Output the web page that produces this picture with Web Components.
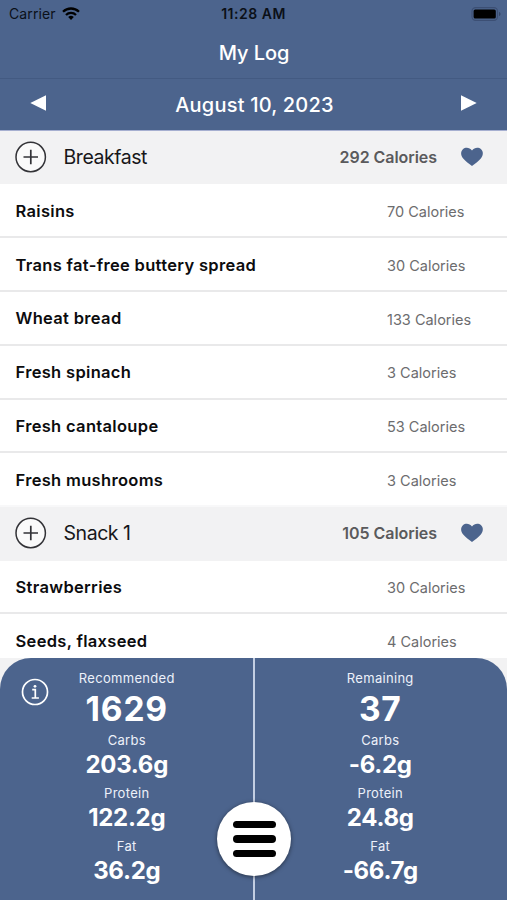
<!DOCTYPE html>
<html lang="en">
<head>
<meta charset="utf-8">
<title>My Log</title>
<style>
  body {
    margin: 0;
    background: #f2f2f3;
    font-family: Inter, Roboto, "Liberation Sans", sans-serif;
    --brand: #4c648d;
  }
</style>
</head>
<body>
<log-screen>
  <status-bar slot="top" carrier="Carrier" time="11:28 AM"></status-bar>
  <title-bar slot="top">My Log</title-bar>
  <date-nav slot="top">August 10, 2023</date-nav>

  <meal-header name="Breakfast" calories="292"></meal-header>
  <food-row calories="70">Raisins</food-row>
  <food-row calories="30">Trans fat-free buttery spread</food-row>
  <food-row calories="133">Wheat bread</food-row>
  <food-row calories="3">Fresh spinach</food-row>
  <food-row calories="53">Fresh cantaloupe</food-row>
  <food-row calories="3" last>Fresh mushrooms</food-row>
  <meal-header name="Snack 1" calories="105"></meal-header>
  <food-row calories="30">Strawberries</food-row>
  <food-row calories="4">Seeds, flaxseed</food-row>

  <summary-panel slot="bottom">
    <macro-column label="Recommended" total="1629" carbs="203.6g" protein="122.2g" fat="36.2g"></macro-column>
    <macro-column label="Remaining" total="37" carbs="-6.2g" protein="24.8g" fat="-66.7g"></macro-column>
  </summary-panel>
</log-screen>

<script>
class LogScreen extends HTMLElement {
  constructor() {
    super();
    this.attachShadow({ mode: "open" });
    this.shadowRoot.innerHTML = `
      <style>
        :host { display: flex; flex-direction: column; height: 900px; overflow: hidden; }
        .top { flex: none; }
        .list { flex: 1; min-height: 0; overflow: hidden; }
        .bottom { flex: none; }
      </style>
      <div class="top"><slot name="top"></slot></div>
      <div class="list"><slot></slot></div>
      <div class="bottom"><slot name="bottom"></slot></div>
    `;
  }
}

class StatusBar extends HTMLElement {
  connectedCallback() {
    this.attachShadow({ mode: "open" });
    this.shadowRoot.innerHTML = `
      <style>
        :host {
          display: grid; grid-template-columns: 1fr auto 1fr; align-items: center;
          height: 27px; padding: 0 6px 0 9px; box-sizing: border-box;
          background: var(--brand); color: #0b1018; font-size: 14px;
        }
        .left { display: flex; align-items: center; gap: 6px; }
        .carrier { letter-spacing: 0.1px; }
        .time { font-weight: 600; letter-spacing: 0.5px; margin-left: -3px; }
        .battery { justify-self: end; }
        svg { display: block; }
      </style>
      <div class="left">
        <span class="carrier">${this.getAttribute("carrier")}</span>
        <svg width="18" height="13" viewBox="0 0 18 13" fill="none" stroke="#000" stroke-width="2.3">
          <path d="M1 4.8a11.4 11.4 0 0 1 16 0"/>
          <path d="M4 8a7.1 7.1 0 0 1 10 0"/>
          <path d="M9 12.9 6.2 10a4.1 4.1 0 0 1 5.6 0z" fill="#000" stroke="none"/>
        </svg>
      </div>
      <span class="time">${this.getAttribute("time")}</span>
      <svg class="battery" width="30" height="14" viewBox="0 0 30 14">
        <rect x="1" y=".6" width="25.5" height="12.8" rx="3.6" fill="none" stroke="#3c4f74" stroke-width="1.1"/>
        <rect x="2.6" y="2.5" width="22.2" height="9" rx="1.6" fill="#000"/>
        <path d="M28 5v4c1-.4 1.5-1.1 1.5-2s-.5-1.6-1.5-2z" fill="#35476a"/>
      </svg>
    `;
  }
}

class TitleBar extends HTMLElement {
  connectedCallback() {
    this.attachShadow({ mode: "open" });
    this.shadowRoot.innerHTML = `
      <style>
        :host {
          display: flex; align-items: center; justify-content: center;
          height: 52px; padding-left: 1px; box-sizing: border-box;
          border-bottom: 1px solid #435a82;
          background: var(--brand); color: #fff;
          font-size: 20px; font-weight: 550; letter-spacing: -0.1px;
        }
      </style>
      <span><slot></slot></span>
    `;
  }
}

class DateNav extends HTMLElement {
  connectedCallback() {
    this.attachShadow({ mode: "open" });
    this.shadowRoot.innerHTML = `
      <style>
        :host {
          display: flex; align-items: center; justify-content: space-between;
          height: 52px; padding: 0 30px; box-sizing: border-box;
          border-bottom: 1px solid #a6afd0;
          background: var(--brand); color: #fff;
          font-size: 20px; font-weight: 550; letter-spacing: 0.2px;
        }
        span { padding: 1px 0 0 2px; }
        svg { display: block; margin-bottom: 4px; }
      </style>
      <svg width="16" height="16" viewBox="0 0 16 16"><path d="M.3 8 16 .3v15.4z" fill="#fff"/></svg>
      <span><slot></slot></span>
      <svg width="16" height="16" viewBox="0 0 16 16"><path d="M15.7 8 0 .3v15.4z" fill="#fff"/></svg>
    `;
  }
}

class MealHeader extends HTMLElement {
  connectedCallback() {
    this.attachShadow({ mode: "open" });
    this.shadowRoot.innerHTML = `
      <style>
        :host {
          display: flex; align-items: center;
          height: 53.4px; padding: 0 23px 1px 15px; box-sizing: border-box;
          background: #f2f2f3;
        }
        .name { flex: 1; margin-left: 16.5px; color: #17171a; font-size: 19.5px; letter-spacing: -0.45px; }
        .calories { color: #5a5a5c; font-size: 16px; font-weight: 600; letter-spacing: -0.05px; margin-right: 23px; }
        svg { display: block; flex: none; }
      </style>
      <svg width="32" height="32" viewBox="0 0 32 32">
        <circle cx="15.7" cy="16" r="14.7" fill="#fafafa" stroke="#333337" stroke-width="1.5"/>
        <path d="M8.5 16H23M15.8 8.7v14.6" stroke="#333337" stroke-width="1.7"/>
      </svg>
      <span class="name">${this.getAttribute("name")}</span>
      <span class="calories">${this.getAttribute("calories")} Calories</span>
      <svg width="24" height="20" viewBox="0 0 24 20">
        <path d="M12 19C9 16.7 5.5 14 3.2 11.4.6 8.5.5 4.500 2.900 2.300 5.500 0 9.500.4 12 3.400c2.500-3 6.500-3.400 9.100-1.100 2.400 2.200 2.300 6.200-.3 9.100C18.500 14 15 16.700 12 19z" fill="var(--brand)"/>
      </svg>
    `;
  }
}

class FoodRow extends HTMLElement {
  connectedCallback() {
    this.attachShadow({ mode: "open" });
    this.shadowRoot.innerHTML = `
      <style>
        :host {
          display: grid; grid-template-columns: 1fr 120px; align-items: center;
          height: 53.8px; padding: 1px 0 0 15.5px; box-sizing: border-box;
          background: #fff; border-bottom: 2px solid #e9e9ea;
        }
        :host([last]) { border-bottom-color: #f8f8f9; }
        .name { color: #0c0c0e; font-size: 16.5px; font-weight: 600; letter-spacing: 0.32px; }
        .calories { color: #6c6c6e; font-size: 14.5px; padding-top: 1.5px; }
      </style>
      <span class="name"><slot></slot></span>
      <span class="calories">${this.getAttribute("calories")} Calories</span>
    `;
  }
}

class MacroColumn extends HTMLElement {
  connectedCallback() {
    this.attachShadow({ mode: "open" });
    const macro = (label, key) => `
      <div class="label">${label}</div>
      <div class="value">${this.getAttribute(key)}</div>`;
    this.shadowRoot.innerHTML = `
      <style>
        :host { display: block; flex: 1; padding-top: 11px; text-align: center; color: #fff; }
        .label { height: 19px; line-height: 19px; font-size: 13px; letter-spacing: 0.3px; color: #edf1fa; }
        .total { height: 43px; line-height: 42px; font-size: 33.5px; font-weight: 700; letter-spacing: 0.8px; }
        .value { height: 34px; line-height: 30px; font-size: 24px; font-weight: 700; letter-spacing: -0.3px; }
      </style>
      <div class="label">${this.getAttribute("label")}</div>
      <div class="total">${this.getAttribute("total")}</div>
      ${macro("Carbs", "carbs")}
      ${macro("Protein", "protein")}
      ${macro("Fat", "fat")}
    `;
  }
}

class SummaryPanel extends HTMLElement {
  connectedCallback() {
    this.attachShadow({ mode: "open" });
    this.shadowRoot.innerHTML = `
      <style>
        :host {
          display: flex; position: relative; height: 242px;
          background: var(--brand); border-radius: 31px 31px 0 0;
        }
        /* divider sits between the two columns, under the menu button */
        .divider { position: absolute; left: 253px; top: 0; bottom: 0; width: 2px; background: #c3cee2; }
        .info { position: absolute; left: 21px; top: 20px; }
        .menu {
          position: absolute; left: 217px; top: 144px; width: 74px; height: 74px;
          padding: 0; border: 0; border-radius: 50%; background: #fff;
          box-shadow: 0 1px 4px rgba(0,0,0,0.5);
          display: flex; flex-direction: column; align-items: center; justify-content: center; gap: 7.5px;
        }
        .menu i { width: 43px; height: 7.2px; border-radius: 4px; background: #000; }
      </style>
      <slot></slot>
      <div class="divider"></div>
      <svg class="info" width="28" height="28" viewBox="0 0 28 28" fill="none" stroke="#fff">
        <circle cx="14" cy="14" r="12.5" stroke-width="1.7"/>
        <path d="M11.2 11.7h3.1V20M10.7 20h7.2" stroke-width="1.7"/>
        <circle cx="14" cy="8.3" r="1.4" fill="#fff" stroke="none"/>
      </svg>
      <button class="menu" aria-label="Menu"><i></i><i></i><i></i></button>
    `;
  }
}

customElements.define("log-screen", LogScreen);
customElements.define("status-bar", StatusBar);
customElements.define("title-bar", TitleBar);
customElements.define("date-nav", DateNav);
customElements.define("meal-header", MealHeader);
customElements.define("food-row", FoodRow);
customElements.define("macro-column", MacroColumn);
customElements.define("summary-panel", SummaryPanel);
</script>
</body>
</html>
